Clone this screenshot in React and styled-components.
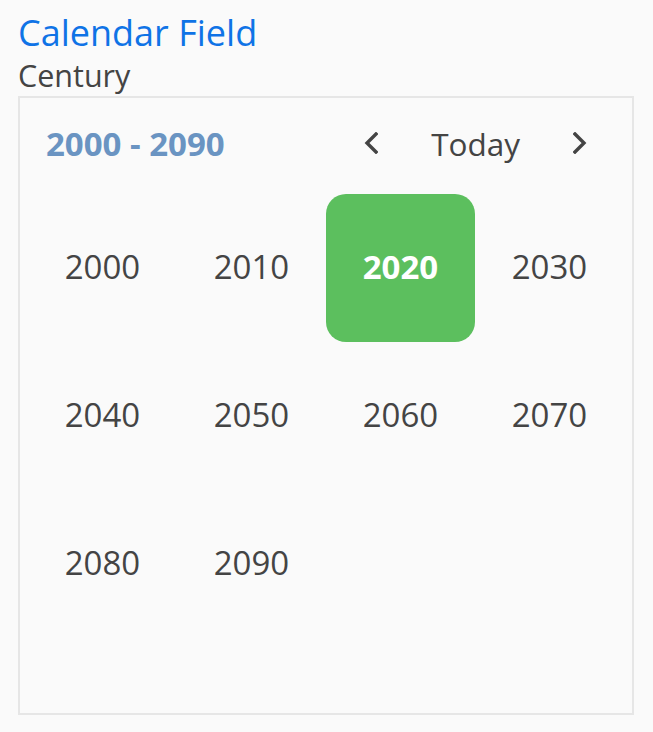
import React from "react";
import styled, { createGlobalStyle } from "styled-components";

const GlobalStyle = createGlobalStyle`
  html, body {
    margin: 0;
    padding: 0;
    background: #fafafa;
    font-family: "Open Sans", "Noto Sans", sans-serif;
  }
`;

const Page = styled.div`
  padding: 8px 19px 0 18px;
`;

const Title = styled.h1`
  margin: 0;
  font-size: 36px;
  font-weight: 400;
  color: #0f73e6;
`;

const Subtitle = styled.div`
  margin-top: -3px;
  font-size: 30.5px;
  color: #444;
`;

const Calendar = styled.div`
  box-sizing: border-box;
  height: 619px;
  padding: 0 8px;
  border: 2px solid #e6e6e6;
  background: #fafafa;
`;

const Header = styled.div`
  box-sizing: border-box;
  height: 96px;
  padding: 0 24px 6px 18px;
  display: flex;
  align-items: center;
  justify-content: space-between;
`;

const Range = styled.div`
  font-size: 33px;
  font-weight: 700;
  color: #6a94c2;
`;

const Nav = styled.div`
  display: flex;
  align-items: center;
  gap: 40px;
`;

const NavButton = styled.button`
  width: 40px;
  height: 40px;
  padding: 0;
  border: none;
  background: none;
  display: flex;
  align-items: center;
  justify-content: center;
  color: #444;
  cursor: pointer;
`;

const Today = styled.span`
  font-size: 31.5px;
  color: #444;
`;

const Grid = styled.div`
  display: grid;
  grid-template-columns: repeat(4, 1fr);
  grid-auto-rows: 148px;
`;

const Cell = styled.div`
  box-sizing: border-box;
  padding-bottom: 3px;
  display: flex;
  align-items: center;
  justify-content: center;
  border-radius: 20px;
  font-size: 33px;
  font-weight: ${(p) => (p.$selected ? 700 : 400)};
  color: ${(p) => (p.$selected ? "#fff" : "#444")};
  background: ${(p) => (p.$selected ? "#5cbf5e" : "transparent")};
`;

const Chevron = ({ dir }) => (
  <svg width="14" height="22" viewBox="0 0 14 22" fill="none">
    <polyline
      points={dir === "left" ? "12,2 3,11 12,20" : "2,2 11,11 2,20"}
      stroke="currentColor"
      strokeWidth="3.4"
      strokeLinecap="square"
      strokeLinejoin="miter"
    />
  </svg>
);

const years = [2000, 2010, 2020, 2030, 2040, 2050, 2060, 2070, 2080, 2090];

export default function App() {
  return (
    <>
      <GlobalStyle />
      <Page>
        <Title>Calendar Field</Title>
        <Subtitle>Century</Subtitle>
        <Calendar>
          <Header>
            <Range>2000 - 2090</Range>
            <Nav>
              <NavButton aria-label="Previous">
                <Chevron dir="left" />
              </NavButton>
              <Today>Today</Today>
              <NavButton aria-label="Next">
                <Chevron dir="right" />
              </NavButton>
            </Nav>
          </Header>
          <Grid>
            {years.map((y) => (
              <Cell key={y} $selected={y === 2020}>
                {y}
              </Cell>
            ))}
          </Grid>
        </Calendar>
      </Page>
    </>
  );
}
